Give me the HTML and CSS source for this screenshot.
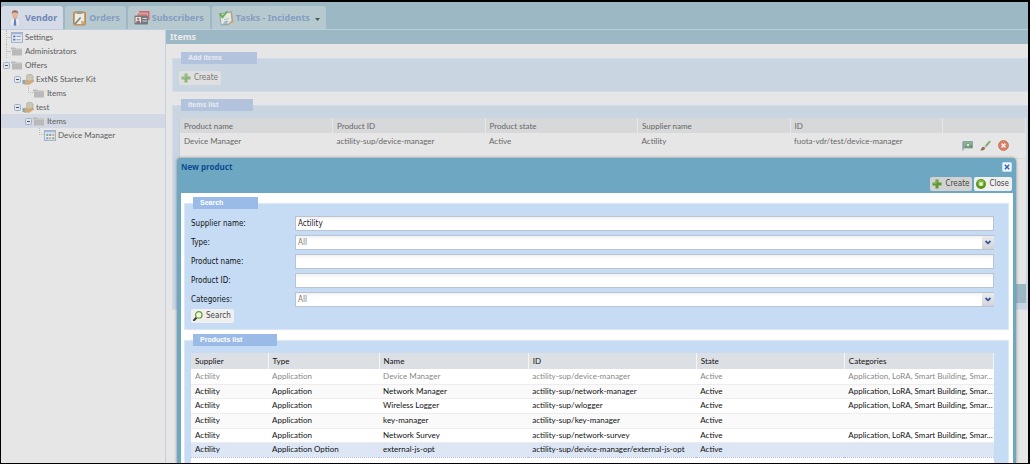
FILE: index.html
```html
<!DOCTYPE html>
<html lang="en">
<head>
<meta charset="utf-8">
<title>Vendor - Items</title>
<link rel="stylesheet" href="styles.css">
</head>
<body>
<svg width="0" height="0" class="defs" aria-hidden="true">
  <defs>
    <symbol id="i-plus" viewBox="0 0 10 10"><path d="M3.5.5h3v3h3v3h-3v3h-3v-3h-3v-3h3z" fill="#5d9a35"/><path d="M4.2 1v3.2H1" fill="none" stroke="#94c274" stroke-width=".8"/></symbol>
    <symbol id="i-folder" viewBox="0 0 12 10"><path d="M0 1h4l1 1h6v7H1V3H0z" fill="#b9b9b9"/><path d="M1 3h10" stroke="#cbcbcb" stroke-width=".7"/></symbol>
    <symbol id="i-offer" viewBox="0 0 12 12"><path d="M4.500 1.500L6.500 0h3l2 2.500V8h-7z" fill="#ccc6b6" stroke="#a59f8f" stroke-width=".6"/><path d="M2 7h3l2 1.200 4.500-1.500.5 1.500-4.500 3H2z" fill="#d5ac78" stroke="#b98f60" stroke-width=".5"/><path d="M0 6.500h2.500v4.500H0z" fill="#7fa9b8"/></symbol>
    <symbol id="i-minus" viewBox="0 0 7 7"><rect x=".5" y=".5" width="6" height="6" rx="1" fill="#dfe3ea" stroke="#9fb0c4"/><path d="M2 3.500h3" stroke="#4a5670"/></symbol>
    <symbol id="i-form" viewBox="0 0 11 10"><rect x=".5" y=".5" width="10" height="9" fill="#e9ecf2" stroke="#a3b2cc"/><path d="M1 1.500h9" stroke="#8fa9d4"/><path d="M2 4h2M2 7h2" stroke="#54709e" stroke-width="1.500"/><path d="M5 4h4M5 7h4" stroke="#8ca3c8"/></symbol>
    <symbol id="i-grid" viewBox="0 0 11 10"><rect x=".5" y=".5" width="10" height="9" fill="#e9ecf2" stroke="#a3b2cc"/><path d="M1 1.500h9" stroke="#8fb0dc"/><path d="M2 3.500h2v2H2zM7.500 6.500h2v2h-2z" fill="#84b084"/><path d="M4.700 3.500h2v2h-2zM2 6.500h2v2H2z" fill="#7fa0d0"/><path d="M7.500 3.500h2v2h-2zM4.700 6.500h2v2h-2z" fill="#d6ac78"/></symbol>
  </defs>
</svg>
<div class="app">
  <nav class="tabs">
    <button class="tab active"><svg class="ti" viewBox="0 0 16 16"><path d="M3 16V11q0-2.500 3-3h4q3 .5 3 3v5z" fill="#e8ecf1" stroke="#bcc6d2" stroke-width=".6"/><path d="M6 8l2 2 2-2v-2H6z" fill="#dbab8c"/><path d="M7.300 9h1.400l.7 6L8 16l-1.400-1z" fill="#5f82b8"/><circle cx="8" cy="4" r="3" fill="#e1b699"/><path d="M4.800 4Q4.500.3 8 .3T11.200 4L10 2.600H6z" fill="#a06a58"/></svg>Vendor</button>
    <button class="tab"><svg class="ti" viewBox="0 0 16 16"><rect x="2.500" y="2" width="12" height="13" rx="1.200" fill="#d6a164" stroke="#b37e48" stroke-width=".8"/><path d="M4 3.500h9V11l-3 3H4z" fill="#ecebe3"/><path d="M13 11h-3v3z" fill="#bab6a4"/><path d="M6 1h5v3H6z" fill="#9a9c91"/><path d="M3 14l6-7 1.200 1L5 14z" fill="#72827a"/></svg>Orders</button>
    <button class="tab"><svg class="ti" viewBox="0 0 16 16"><path d="M5 1h10.500v9H5z" fill="#cf6b6d"/><path d="M3 3h10.500v9H3z" fill="#dc8585" stroke="#e7dada" stroke-width=".5"/><rect x=".5" y="5.500" width="13.500" height="9" rx=".8" fill="#73797f"/><path d="M1.500 7h5.500v6H1.500z" fill="#e5e2e0"/><circle cx="4.200" cy="9" r="1.300" fill="#b47775"/><path d="M2 13q0-2.500 2.200-2.500T6.500 13z" fill="#9c6967"/><path d="M8.500 8.500H13M8.500 11H13" stroke="#d5d8da"/></svg>Subscribers</button>
    <button class="tab"><svg class="ti" viewBox="0 0 16 16"><path d="M3 4l11-3 1.500 11-5.500 3.500L3 14z" fill="#dba564"/><path d="M2 4l11-2 1 8.500-4 4L3 15z" fill="#eae8dc" stroke="#6c9ab4" stroke-width=".7"/><path d="M2 6L.7 3.500 3 3l1.500 2.500L9 .8l1 1-5.500 7z" fill="#6fae58"/><path d="M6 9.500l5-.8M6 12l4-.8" stroke="#9fb6c2" stroke-width=".8"/><path d="M3 15l6-5 1 4.500z" fill="#78a4c5" opacity=".6"/></svg>Tasks - Incidents<svg class="caret" viewBox="0 0 5 3"><path d="M0 0h5L2.500 3z" fill="#4b5b60"/></svg></button>
  </nav>
  <div class="columns">
    <nav class="tree">
      <a href="#" class="node lv1"><i class="stub"></i><svg class="ic"><use href="#i-form"/></svg>Settings</a>
      <a href="#" class="node lv1"><i class="stub"></i><svg class="ic"><use href="#i-folder"/></svg>Administrators</a>
      <a href="#" class="node lv1"><svg class="tw"><use href="#i-minus"/></svg><svg class="ic"><use href="#i-folder"/></svg>Offers</a>
      <a href="#" class="node lv2"><svg class="tw"><use href="#i-minus"/></svg><svg class="ic"><use href="#i-offer"/></svg>ExtNS Starter Kit</a>
      <a href="#" class="node lv3"><i class="stub last"></i><svg class="ic"><use href="#i-folder"/></svg>Items</a>
      <a href="#" class="node lv2"><svg class="tw"><use href="#i-minus"/></svg><svg class="ic"><use href="#i-offer"/></svg>test</a>
      <a href="#" class="node lv3 selected"><svg class="tw"><use href="#i-minus"/></svg><svg class="ic"><use href="#i-folder"/></svg>Items</a>
      <a href="#" class="node lv4"><i class="stub last"></i><svg class="ic"><use href="#i-grid"/></svg>Device Manager</a>
    </nav>
    <main class="main">
      <h1 class="bar">Items</h1>
      <div class="content">
        <fieldset class="group">
          <legend>Add items</legend>
          <button class="btn faded"><svg class="bi"><use href="#i-plus"/></svg>Create</button>
        </fieldset>
        <fieldset class="group list">
          <legend>Items list</legend>
          <div class="panel">
            <table class="grid items">
              <thead><tr><th>Product name</th><th>Product ID</th><th>Product state</th><th>Supplier name</th><th>ID</th><th class="tools"></th></tr></thead>
              <tbody><tr><td>Device Manager</td><td>actility-sup/device-manager</td><td>Active</td><td>Actility</td><td>fuota-vdr/test/device-manager</td>
              <td class="tools"><div class="actions">
                <button aria-label="View"><svg viewBox="0 0 11 11"><path d="M1 1.500v9" stroke="#7d8791"/><path d="M1.500 1.500h9v6.500h-9z" fill="#8fb287" stroke="#7295a5" stroke-width=".7"/><path d="M2 7.500l3-3 2 2 3-2v3z" fill="#5f9455"/><circle cx="6" cy="5" r="1.800" fill="#dfe7ea" stroke="#648298" stroke-width=".7"/></svg></button>
                <button aria-label="Edit"><svg viewBox="0 0 11 11"><path d="M5 5.500L9.300.7q1.500-.3 1.300 1L6.500 7z" fill="#7fa860"/><path d="M3.800 6.500l1.400-1.200 1.500 1.500L5.500 8z" fill="#c3c6c9"/><path d="M.5 10.500q1-3.500 3.200-3.700l1.600 1.400Q4.500 10.500.5 10.500z" fill="#977052"/></svg></button>
                <button aria-label="Delete"><svg viewBox="0 0 11 11"><circle cx="5.500" cy="5.500" r="5" fill="#d98067" stroke="#c66750" stroke-width=".7"/><path d="M3.600 3.600l3.800 3.800M7.400 3.600L3.600 7.400" stroke="#f1ebe9" stroke-width="1.500"/></svg></button>
              </div></td></tr></tbody>
            </table>
          </div>
          <div class="bbar"></div>
        </fieldset>
      </div>
    </main>
  </div>

  <section class="dialog" role="dialog" aria-labelledby="dlg-title">
    <header class="dhead">
      <h2 id="dlg-title">New product</h2>
      <button class="x" aria-label="Close window"><svg viewBox="0 0 10 10"><rect x=".5" y=".5" width="9" height="9" rx="1" fill="#edf4fc" stroke="#c8dcf3"/><path d="M2.800 2.800l4.400 4.400M7.200 2.800L2.800 7.200" stroke="#3a67b4" stroke-width="1.500"/></svg></button>
    </header>
    <div class="dtools">
      <button class="btn pressed"><svg class="bi"><use href="#i-plus"/></svg>Create</button>
      <button class="btn"><svg class="bi" viewBox="0 0 10 10"><circle cx="5" cy="5" r="5" fill="#57951c"/><circle cx="5" cy="4" r="3.300" fill="#7fba38"/><path d="M3.500 3.500l3 3M6.500 3.500l-3 3" stroke="#fff" stroke-width="1.500"/></svg>Close</button>
    </div>
    <div class="dbody">
      <fieldset class="group">
        <legend>Search</legend>
        <form class="form">
          <label for="supplier">Supplier name:</label><input id="supplier" type="text" value="Actility">
          <label for="type">Type:</label><span class="combo"><select id="type"><option>All</option></select><svg class="arrow" viewBox="0 0 12 13"><path d="M3.500 5l2.500 2.300L8.500 5" fill="none" stroke="#34579b" stroke-width="1.700"/></svg></span>
          <label for="pname">Product name:</label><input id="pname" type="text">
          <label for="pid">Product ID:</label><input id="pid" type="text">
          <label for="cat">Categories:</label><span class="combo"><select id="cat"><option>All</option></select><svg class="arrow" viewBox="0 0 12 13"><path d="M3.500 5l2.500 2.300L8.500 5" fill="none" stroke="#34579b" stroke-width="1.700"/></svg></span>
        </form>
        <button class="btn"><svg class="bi" viewBox="0 0 10 10"><path d="M3.300 6.800L1 9.200" stroke="#3c3f39" stroke-width="2" stroke-linecap="round"/><circle cx="5.800" cy="3.900" r="3.200" fill="#eef6ea" stroke="#6b9f2b" stroke-width="1.300"/></svg>Search</button>
      </fieldset>
      <fieldset class="group">
        <legend>Products list</legend>
        <div class="sheet">
        <table class="grid products">
          <colgroup><col class="c1"><col class="c2"><col class="c3"><col class="c4"><col class="c5"><col class="c6"></colgroup>
          <thead><tr><th>Supplier</th><th>Type</th><th>Name</th><th>ID</th><th>State</th><th>Categories</th></tr></thead>
          <tbody>
            <tr class="off"><td>Actility</td><td>Application</td><td>Device Manager</td><td>actility-sup/device-manager</td><td>Active</td><td>Application, LoRA, Smart Building, Smar...</td></tr>
            <tr><td>Actility</td><td>Application</td><td>Network Manager</td><td>actility-sup/network-manager</td><td>Active</td><td>Application, LoRA, Smart Building, Smar...</td></tr>
            <tr><td>Actility</td><td>Application</td><td>Wireless Logger</td><td>actility-sup/wlogger</td><td>Active</td><td>Application, LoRA, Smart Building, Smar...</td></tr>
            <tr><td>Actility</td><td>Application</td><td>key-manager</td><td>actility-sup/key-manager</td><td>Active</td><td></td></tr>
            <tr><td>Actility</td><td>Application</td><td>Network Survey</td><td>actility-sup/network-survey</td><td>Active</td><td>Application, LoRA, Smart Building, Smar...</td></tr>
            <tr class="selected"><td>Actility</td><td>Application Option</td><td>external-js-opt</td><td>actility-sup/device-manager/external-js-opt</td><td>Active</td><td></td></tr>
          </tbody>
        </table>
        </div>
      </fieldset>
    </div>
  </section>
</div>
</body>
</html>
```
FILE: styles.css
```css
* { box-sizing: border-box; }
body { margin: 0; }
.defs { position: absolute; }
svg { display: block; flex: none; }
button { font: inherit; color: inherit; border: 0; padding: 0; background: none; }
.app {
  position: relative;
  display: flex;
  flex-direction: column;
  height: 100vh;
  overflow: hidden;
  border: solid #000;
  border-width: 2px 2px 1px 1px;
  background: #e6e6e6;
  color: #777;
  font: 8px/12px Lato, "Liberation Sans", sans-serif;
}

/* top tabs */
.tabs {
  display: flex;
  gap: 2px;
  padding-top: 4px;
  background: #9bb8c4;
  border-bottom: 1px solid #bccde0;
}
.tab {
  display: flex;
  align-items: center;
  gap: 2px;
  height: 23px;
  padding: 0 6px;
  border-radius: 3px 3px 0 0;
  background: #b5c9cf;
  color: #869dc2;
  font: bold 9px/14px "Noto Sans", sans-serif;
}
.tab.active { background: #d4dae6; color: #7087b6; }
.ti { width: 16px; height: 16px; }
.caret { width: 5px; height: 3px; margin: 3px 0 0 3px; }

/* navigation tree */
.columns { display: flex; flex: 1; min-height: 0; }
.tree { width: 165px; border-right: 1px solid #c5cfe2; flex: none; }
.node {
  display: flex;
  align-items: center;
  height: 14px;
  color: #5c5c5c;
  text-decoration: none;
}
.node.selected { background: #d3d9e4; }
.lv1 { padding-left: 2px; }
.lv2 { padding-left: 13px; }
.lv3 { padding-left: 24px; }
.lv4 { padding-left: 35px; }
.tw { width: 7px; height: 7px; margin-right: 1px; }
.ic { width: 12px; height: 11px; margin-right: 2px; }
.stub {
  width: 5px;
  height: 14px;
  margin-left: 3px;
  background: linear-gradient(#c6c6c6, #c6c6c6) 0 7px / 4px 1px no-repeat;
  border-left: 1px dotted #bebebe;
}
.stub.last {
  height: 7px;
  align-self: flex-start;
  border-bottom: 1px dotted #bebebe;
  background: none;
}

/* main panel */
.main { flex: 1; min-width: 0; }
.bar {
  margin: 0;
  padding-left: 4px;
  height: 14px;
  background: #9bb8c4;
  color: #ececec;
  font: bold 9px/14px "Noto Sans", sans-serif;
}
.content {
  display: flex;
  flex-direction: column;
  gap: 7px;
  padding: 8px 0 0 6px;
}
.group {
  min-width: 0;
  margin: 0;
  padding: 7px 14px 6px 6px;
  border: 1px solid #d0dcec;
  background: #c9d5e1;
}
.content .group { padding-right: 2px; border-right: 0; }
.group legend {
  height: 12px;
  margin-left: 2px;
  padding: 0 35px 0 7px;
  background: #b3c3dd;
  color: #e9ecf2;
  font: bold 7px/12px "Liberation Sans", sans-serif;
}
.btn {
  display: inline-flex;
  align-items: center;
  gap: 3px;
  height: 14px;
  padding: 0 3px 0 2px;
  border-radius: 2px;
  background: #f0f0f0;
  color: #444;
  font: 8px/14px "DejaVu Sans Condensed", sans-serif;
  vertical-align: top;
}
.btn.pressed { background: #d2d2d2; }
.btn.faded { background: #dfdfdf; color: #777; }
.bi { width: 10px; height: 10px; }
.faded .bi { opacity: .6; }

/* tables */
.grid { width: 100%; table-layout: fixed; border-collapse: collapse; }
.grid th, .grid td {
  padding: 0 0 0 4px;
  font-weight: normal;
  text-align: left;
  white-space: nowrap;
}
.grid th {
  height: 15px;
  background: #d6d8da;
  border-right: 1px solid #e4e7ea;
}
.panel { min-height: 166px; background: #e6e6e6; border-left: 1px solid #c5cfe2; }
.items td { height: 25px; padding-bottom: 8px; border-bottom: 1px solid #dadada; color: #666; }
.items th { color: #666; }
.items .tools { width: 83px; }
.items td.tools { padding: 0 17px 0 0; }
.actions { display: flex; justify-content: flex-end; gap: 7px; }
.actions svg { width: 11px; height: 11px; }
.bbar { height: 19px; background: #9bb8c4; }

/* dialog */
.dialog {
  position: absolute;
  top: 156px;
  left: 176px;
  right: 12px;
  bottom: 0;
  display: flex;
  flex-direction: column;
  padding: 0 3px 0 4px;
  overflow: hidden;
  border-radius: 4px 4px 0 0;
  background: #6da7c1;
  box-shadow: 0 0 3px #777;
  color: #111;
}
.dhead { display: flex; align-items: center; justify-content: space-between; padding-top: 3px; }
.dhead h2 { margin: 0; color: #0d4b92; font: bold 8px/12px "Noto Sans", sans-serif; }
.x { margin-right: 1px; }
.x svg { width: 10px; height: 10px; }
.dtools { display: flex; justify-content: flex-end; gap: 2px; padding: 4px 1px 2px; }
.dbody {
  display: flex;
  flex-direction: column;
  flex: 1;
  gap: 4px;
  min-height: 0;
  padding: 4px 4px 0 3px;
  background: #fff;
}
.dbody .group { flex: none; border-color: #dbe8f8; background: #c5dcf4; }
.dbody legend { background: #9abbe8; color: #fff; }

.form {
  display: grid;
  grid-template-columns: 104px 1fr;
  gap: 4px 0;
  margin-bottom: 2px;
  font: 8px/15px "DejaVu Sans Condensed", sans-serif;
}
.form input, .form select {
  display: block;
  width: 100%;
  height: 15px;
  margin: 0;
  padding: 0 2px;
  border: 1px solid #b9c3d2;
  border-radius: 0;
  background: linear-gradient(#f1f1f1, #fff 4px);
  color: #222;
  font: inherit;
  line-height: 13px;
  appearance: none;
}
.form select { color: #777; }
.combo { position: relative; }
.arrow {
  position: absolute;
  top: 1px;
  right: 0;
  width: 12px;
  height: 13px;
  background: linear-gradient(#ececee, #cfd3d9);
  pointer-events: none;
}

.sheet { padding-bottom: 12px; background: #fff; }
.products th { height: 16px; background: #dcdfe4; border-color: #f4f5f7; }
.products td { height: 15px; border-bottom: 1px solid #ededed; line-height: 13px; }
.products tr:nth-child(3n+2) td { height: 14px; }
.products tr:nth-child(even) { background: #fafafa; }
.products .off { color: #888; }
.products tr.selected { background: #dce6f5; }
.products .selected td { border-top: 1px dotted #a9bfe6; border-bottom: 1px dotted #a9bfe6; }
.c1 { width: 77px; }
.c2 { width: 111px; }
.c3 { width: 149px; }
.c4 { width: 168px; }
.c5 { width: 148px; }
.c6 { width: 149px; }
```
